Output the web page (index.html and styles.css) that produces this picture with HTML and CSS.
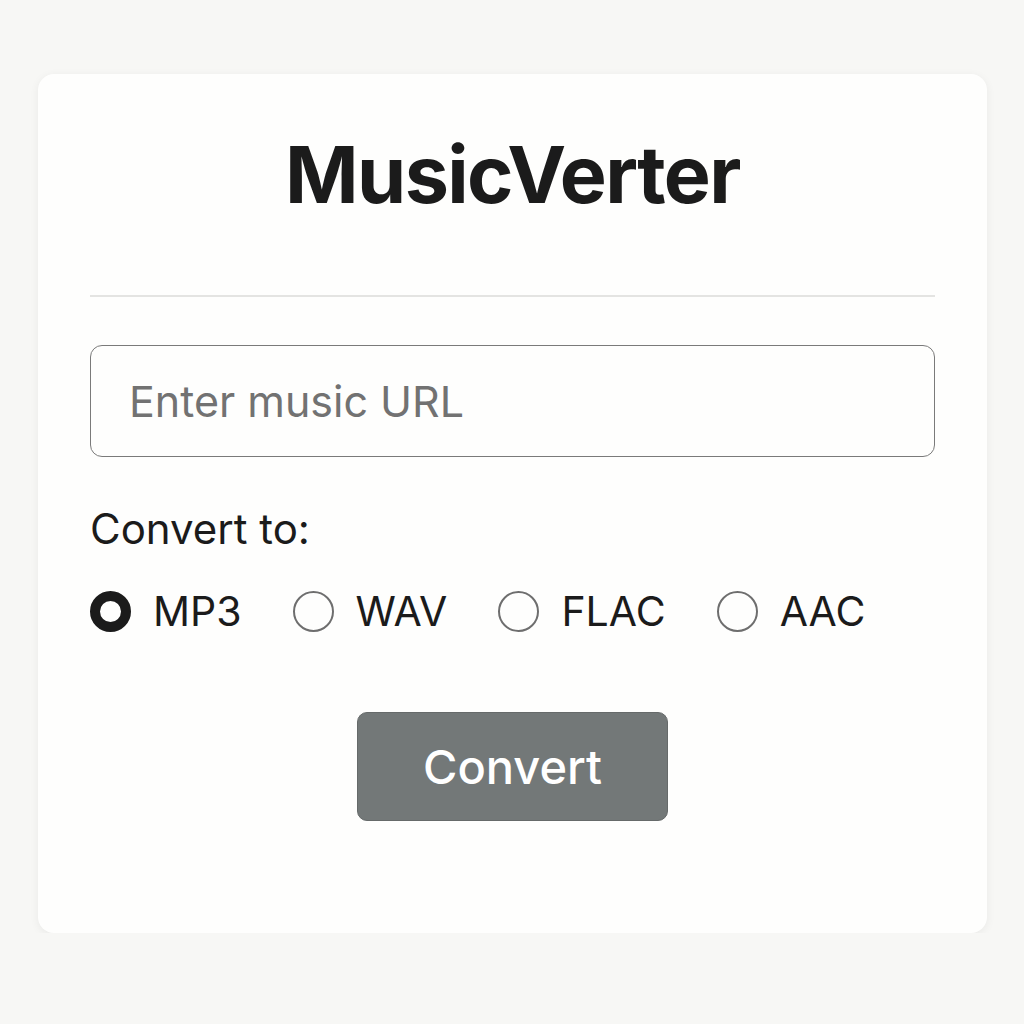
FILE: index.html
```html
<!DOCTYPE html>
<html lang="en">
<head>
<meta charset="UTF-8">
<meta name="viewport" content="width=device-width, initial-scale=1.0">
<title>MusicVerter</title>
<link rel="stylesheet" href="styles.css">
</head>
<body>
    <div class="card">
        <h1 class="title">MusicVerter</h1>
        <hr class="divider">

        <input class="url-input" type="text" placeholder="Enter music URL">

        <p class="label">Convert to:</p>
        <div class="formats">
            <label class="format"><input type="radio" name="format" checked><span class="dot"></span>MP3</label>
            <label class="format"><input type="radio" name="format"><span class="dot"></span>WAV</label>
            <label class="format"><input type="radio" name="format"><span class="dot"></span>FLAC</label>
            <label class="format"><input type="radio" name="format"><span class="dot"></span>AAC</label>
        </div>

        <div class="actions">
            <button class="convert">Convert</button>
        </div>
    </div>
</body>
</html>
```

FILE: styles.css
```css
body {
    margin: 0;
    background-color: #f7f7f5;
    font-family: Inter, "Noto Sans", sans-serif;
    color: #1b1b1b;
}
.card {
    box-sizing: border-box;
    width: 949px;
    height: 859px;
    margin: 74px 0 0 38px;
    padding: 0 52px;
    background-color: #fefefd;
    border-radius: 16px;
    box-shadow: 0 2px 10px rgba(0, 0, 0, 0.06);
}
.title {
    margin: 0;
    padding-top: 52px;
    font-size: 79px;
    font-weight: 700;
    letter-spacing: -1.6px;
    line-height: 96px;
    text-align: center;
}
.divider {
    margin: 73px 0 0;
    border: none;
    border-top: 2px solid #e4e4e2;
}
.url-input {
    box-sizing: border-box;
    display: block;
    width: 100%;
    height: 112px;
    margin-top: 48px;
    padding: 0 38px;
    border: 1.5px solid #7a7a7a;
    border-radius: 12px;
    background: #fefefd;
    font-family: inherit;
    font-size: 43px;
    color: #1b1b1b;
    outline: none;
}
.url-input::placeholder {
    color: #727272;
}
.label {
    margin: 44px 0 0;
    font-size: 42px;
    line-height: 56px;
}
.formats {
    display: flex;
    align-items: center;
    margin-top: 26px;
    height: 56px;
}
.format {
    display: flex;
    align-items: center;
    font-size: 41px;
    margin-right: 51px;
}
.format input {
    display: none;
}
.dot {
    box-sizing: border-box;
    width: 41px;
    height: 41px;
    margin-right: 22px;
    border: 2px solid #6e6e6e;
    border-radius: 50%;
}
.format input:checked + .dot {
    border: 10px solid #1b1b1b;
}
.actions {
    display: flex;
    justify-content: center;
    margin-top: 73px;
}
.convert {
    width: 311px;
    height: 109px;
    border: 1px solid #666a6a;
    border-radius: 10px;
    background-color: #737878;
    color: #ffffff;
    font-family: inherit;
    font-size: 47px;
    font-weight: 500;
    cursor: pointer;
}
```
